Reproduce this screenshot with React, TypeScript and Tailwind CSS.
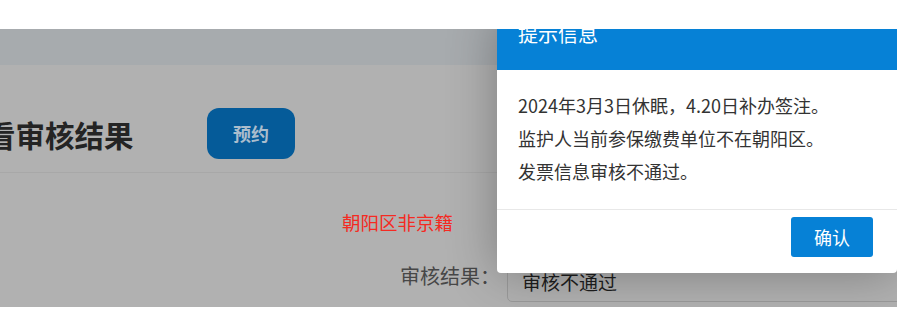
export default function App() {
  const font = { fontFamily: '"Noto Sans CJK SC", "Noto Sans", sans-serif' }

  return (
    <div className="w-[897px] h-[324px] bg-white overflow-hidden flex flex-col" style={font}>
      <div className="h-[29px] shrink-0 bg-white" />

      <div className="relative h-[278px] shrink-0 bg-[#b1b1b1] overflow-hidden">
        <div className="h-[36px] bg-[#a7abae]" />

        <div className="flex items-center pt-[43px] pb-[13px] border-b border-[#a8a8a8]">
          <h1 className="ml-[-14px] shrink-0 whitespace-nowrap text-[29.5px] leading-[36px] font-bold text-[#242424]">看审核结果</h1>
          <button className="ml-[73.5px] shrink-0 w-[88px] h-[51px] rounded-[12px] bg-[#055b99] text-[18px] font-bold text-[#aabdcd]">
            预约
          </button>
        </div>

        <div className="ml-[342px] mt-[36px] text-[18.5px] leading-[26px] text-[#f52a22] whitespace-nowrap">朝阳区非京籍</div>

        <div className="flex items-start ml-[400px] mt-[27px]">
          <span className="shrink-0 whitespace-nowrap mt-[2px] text-[20px] leading-[24px] text-[#474747]">审核结果：</span>
          <div className="shrink-0 ml-[7px] w-[420px] h-[40px] rounded-[5px] border border-[#9a9a9a] pl-[14px] text-[19px] leading-[38px] text-[#1e1e1e] whitespace-nowrap">
            审核不通过
          </div>
        </div>

        <div className="absolute z-10 left-[497px] top-[-15px] w-[400px] bg-white rounded-[4px] shadow-[0_0_50px_rgba(0,0,0,0.3)]">
          <div className="h-[56px] bg-[#0681d6] rounded-t-[4px] pl-[21px] pt-[6px] text-[20px] leading-[28px] text-white whitespace-nowrap">
            提示信息
          </div>
          <div className="pl-[21px] pt-[19px] pb-[21px] border-b border-[#e8e8e8] text-[18px] leading-[33px] text-[#333] whitespace-nowrap">
            <p>2024年3月3日休眠，4.20日补办签注。</p>
            <p>监护人当前参保缴费单位不在朝阳区。</p>
            <p>发票信息审核不通过。</p>
          </div>
          <div className="flex justify-end pt-[7px] pb-[16px] pr-[24px]">
            <button className="w-[82px] h-[40px] rounded-[3px] bg-[#0681d6] text-[18px] text-white">确认</button>
          </div>
        </div>
      </div>
    </div>
  )
}
